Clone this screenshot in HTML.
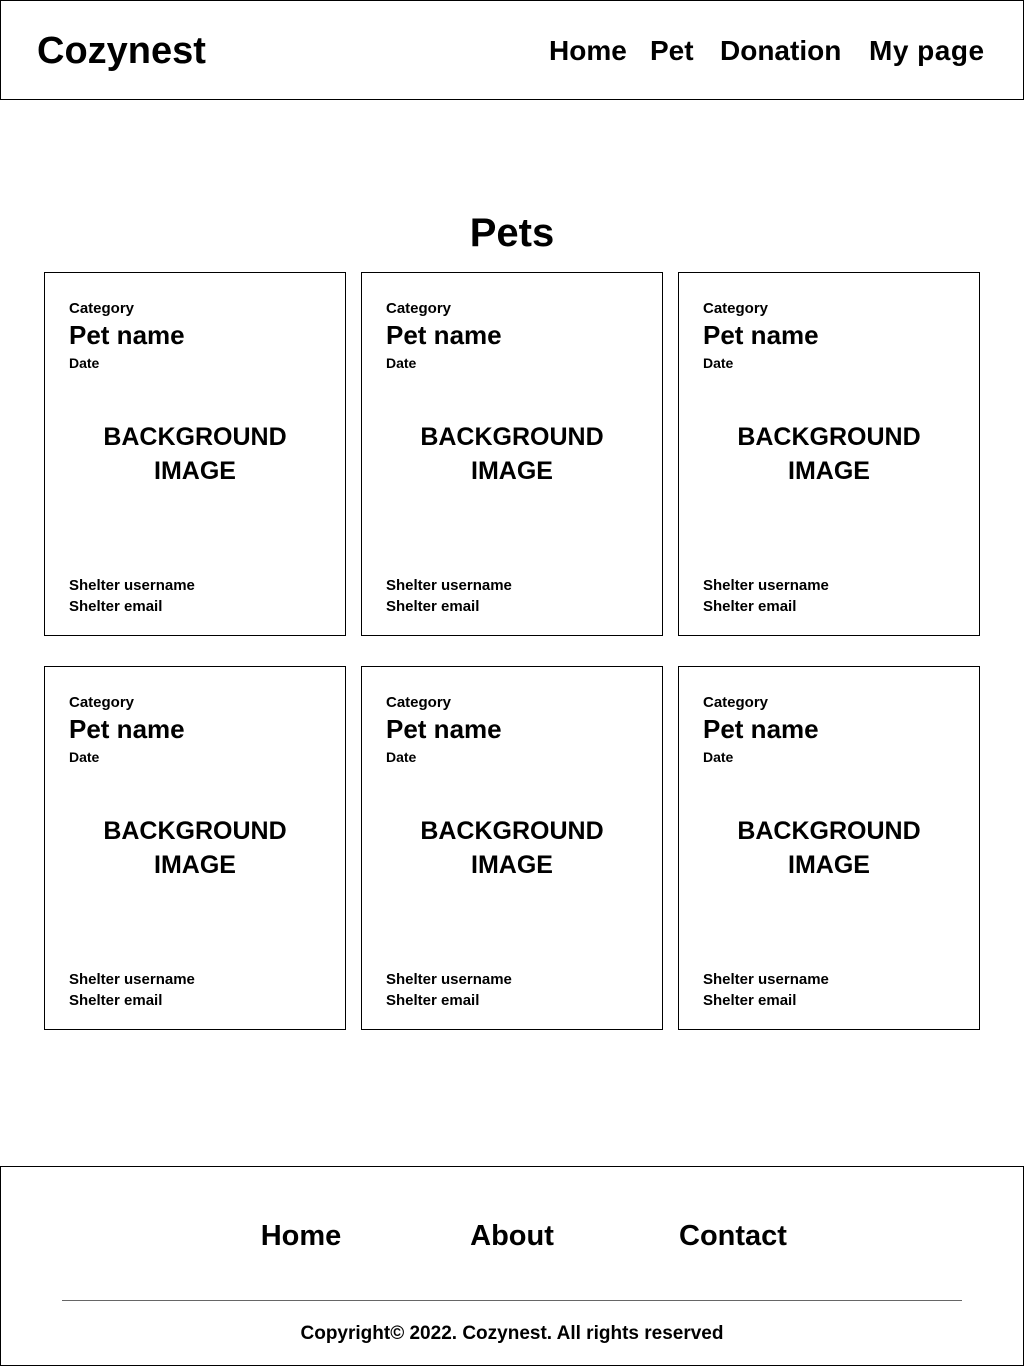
<!DOCTYPE html>
<html><head><meta charset="utf-8"><style>
*{margin:0;padding:0;box-sizing:border-box}
body{width:1024px;height:1366px;position:relative;background:#fff;font-family:"Liberation Sans",sans-serif;font-weight:bold;color:#000;overflow:hidden}
.a{position:absolute;white-space:nowrap}
.hdr{position:absolute;left:0;top:0;width:1024px;height:100px;border:1px solid #000}
.ftr{position:absolute;left:0;top:1166px;width:1024px;height:200px;border:1px solid #000}
.card{position:absolute;width:302px;height:364px;border:1px solid #000}
.card .a{left:24px}
.t{height:20px;line-height:20px}
.c1{top:26px;font-size:15px}
.c2{top:47px;font-size:26px;line-height:30px;height:30px}
.c3{top:80px;font-size:14px}
.bg{position:absolute;left:0;width:300px;top:147px;text-align:center;font-size:25px;line-height:34px}
.s1{top:303px;font-size:15px}
.s2{top:324px;font-size:15px}
.nav{top:34px;font-size:28px;line-height:32px}
</style></head><body>
<div class="hdr">
<div class="a" style="left:36px;top:28px;font-size:38px;line-height:44px">Cozynest</div>
<div class="a nav" style="left:548px">Home</div>
<div class="a nav" style="left:649px">Pet</div>
<div class="a nav" style="left:719px">Donation</div>
<div class="a nav" style="left:868px;letter-spacing:0.5px">My page</div>
</div>
<div class="a" style="left:0;width:1024px;text-align:center;top:210px;font-size:40px;line-height:46px">Pets</div>

<div class="card" style="left:44px;top:272px"><div class="a t c1">Category</div><div class="a c2">Pet name</div><div class="a t c3">Date</div><div class="bg">BACKGROUND<br>IMAGE</div><div class="a t s1">Shelter username</div><div class="a t s2">Shelter email</div></div>
<div class="card" style="left:361px;top:272px"><div class="a t c1">Category</div><div class="a c2">Pet name</div><div class="a t c3">Date</div><div class="bg">BACKGROUND<br>IMAGE</div><div class="a t s1">Shelter username</div><div class="a t s2">Shelter email</div></div>
<div class="card" style="left:678px;top:272px"><div class="a t c1">Category</div><div class="a c2">Pet name</div><div class="a t c3">Date</div><div class="bg">BACKGROUND<br>IMAGE</div><div class="a t s1">Shelter username</div><div class="a t s2">Shelter email</div></div>
<div class="card" style="left:44px;top:666px"><div class="a t c1">Category</div><div class="a c2">Pet name</div><div class="a t c3">Date</div><div class="bg">BACKGROUND<br>IMAGE</div><div class="a t s1">Shelter username</div><div class="a t s2">Shelter email</div></div>
<div class="card" style="left:361px;top:666px"><div class="a t c1">Category</div><div class="a c2">Pet name</div><div class="a t c3">Date</div><div class="bg">BACKGROUND<br>IMAGE</div><div class="a t s1">Shelter username</div><div class="a t s2">Shelter email</div></div>
<div class="card" style="left:678px;top:666px"><div class="a t c1">Category</div><div class="a c2">Pet name</div><div class="a t c3">Date</div><div class="bg">BACKGROUND<br>IMAGE</div><div class="a t s1">Shelter username</div><div class="a t s2">Shelter email</div></div>

<div class="ftr">
<div class="a" style="left:200px;width:200px;text-align:center;top:52px;font-size:29px;line-height:34px">Home</div>
<div class="a" style="left:411px;width:200px;text-align:center;top:52px;font-size:29px;line-height:34px">About</div>
<div class="a" style="left:632px;width:200px;text-align:center;top:52px;font-size:29px;line-height:34px">Contact</div>
<div class="a" style="left:61px;top:133px;width:900px;height:1px;background:#666"></div>
<div class="a" style="left:0;width:1022px;text-align:center;top:155px;font-size:19px;line-height:24px">Copyright© 2022. Cozynest. All rights reserved</div>
</div>
</body></html>
